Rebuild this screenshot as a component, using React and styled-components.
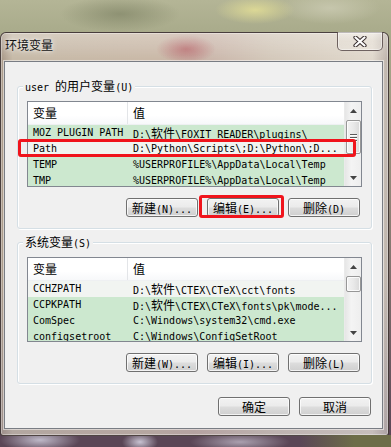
import React from "react";
import styled, { createGlobalStyle } from "styled-components";

const Global = createGlobalStyle`
  html, body { margin:0; padding:0; }
  body { width:391px; height:447px; overflow:hidden; }
  * { box-sizing:border-box; }
`;

const Desktop = styled.div`
  position:relative;
  width:391px;
  height:447px;
  overflow:hidden;
  padding-top:32px;
  font-family:"DejaVu Sans Mono","Noto Sans CJK SC",monospace;
  background:
    radial-gradient(ellipse 40px 14px at 255px 10px, rgba(230,225,150,.8), transparent),
    radial-gradient(ellipse 60px 18px at 120px 14px, rgba(120,125,95,.6), transparent),
    radial-gradient(ellipse 50px 16px at 330px 8px, rgba(200,200,175,.9), transparent),
    radial-gradient(ellipse 40px 12px at 40px 440px, rgba(190,185,200,1), transparent),
    radial-gradient(ellipse 18px 10px at 140px 442px, rgba(200,195,210,1), transparent),
    radial-gradient(ellipse 50px 10px at 240px 442px, rgba(170,160,175,1), transparent),
    linear-gradient(180deg, #b4b596 0px, #a9ab8b 32px, #8f8577 200px, #5a4656 436px),
    #6a5a5a;
  &::after {
    content:"";
    position:absolute; left:300px; right:0; bottom:0; height:12px;
    background:linear-gradient(90deg, rgba(110,110,75,0), #6d6d48 60%);
  }
`;

const Window = styled.div`
  width:389px;
  height:404px;
  display:flex;
  flex-direction:column;
  padding:0 5px 6px 3px;
  border:1px solid rgba(45,35,35,.8);
  border-radius:6px 6px 3px 3px;
  background:
    linear-gradient(180deg, rgba(255,255,255,.28), rgba(255,255,255,0) 26px),
    radial-gradient(ellipse 30px 14px at 185px 16px, rgba(180,95,100,.75), transparent),
    linear-gradient(180deg, rgba(0,0,0,0) 60%, rgba(120,110,140,.25)),
    linear-gradient(90deg, #a89888 0, #c6baa8 3%, #cab9a8 40%, #c9b3a8 50%, #d4c9bb 70%, #e0d8cc 96%, #bdb3ab 100%);
  box-shadow:inset 0 0 0 1px rgba(255,255,255,.35);
`;

const TitleBar = styled.div`
  height:28px;
  display:flex;
  justify-content:space-between;
  align-items:flex-start;
`;

const Title = styled.div`
  margin:5px 0 0 1px;
  font-family:"Noto Sans CJK SC",sans-serif;
  font-size:12px;
  line-height:14px;
  color:#111;
  text-shadow:0 0 6px rgba(255,255,255,.9), 0 0 3px rgba(255,255,255,.7);
`;

const CloseBtn = styled.div`
  margin-top:-1px;
  width:46px;
  height:19px;
  display:flex;
  align-items:center;
  justify-content:center;
  border:1px solid rgba(70,55,55,.75);
  border-top:none;
  border-radius:0 0 5px 5px;
  background:linear-gradient(180deg, rgba(255,255,255,.35), rgba(255,255,255,.1) 50%, rgba(255,255,255,.2));
  box-shadow:inset 0 0 0 1px rgba(255,255,255,.45);
`;

const Client = styled.div`
  flex:1;
  display:flex;
  flex-direction:column;
  padding:0 10px 0 12px;
  background:#f0f0f0;
  border:1px solid rgba(70,75,85,.7);
  box-shadow:0 0 0 1px rgba(255,255,255,.5);
`;

const Group = styled.div`
  margin-top:${p => p.$top}px;
  display:flex;
  flex-direction:column;
  padding:0 9px 11px;
  border:1px solid #d5dfe5;
  border-radius:3px;
  box-shadow:inset 1px 1px 0 #fff, 1px 1px 0 #fff;
`;

const Legend = styled.div`
  align-self:flex-start;
  margin:-8px 0 0 -4px;
  padding:0 2px;
  height:14px;
  line-height:14px;
  font-size:10px;
  color:#000;
  background:#f0f0f0;
  white-space:nowrap;
`;

const Cjk = styled.span`
  font-family:"Noto Sans CJK SC",sans-serif;
  font-size:12px;
`;

const List = styled.div`
  margin-top:8px;
  height:${p => p.$h}px;
  display:flex;
  border:1px solid #828790;
  background:#fff;
  overflow:hidden;
`;

const Table = styled.div`
  flex:1;
  min-width:0;
  display:flex;
  flex-direction:column;
`;

const Header = styled.div`
  flex:none;
  height:23px;
  display:flex;
  background:linear-gradient(180deg, #fff 0%, #fff 60%, #f7f8fa 100%);
  border-bottom:1px solid #eef0f2;
`;

const HeadCell = styled.div`
  ${p => p.$w ? `width:${p.$w}px; border-right:1px solid #e3e5e8;` : "flex:1;"}
  padding-left:5px;
  line-height:22px;
  font-family:"Noto Sans CJK SC",sans-serif;
  font-size:12px;
  color:#000;
`;

const Row = styled.div`
  flex:none;
  height:16px;
  display:flex;
  background:${p => p.$hl ? "#f1f4f1" : "#cce8cf"};
`;

const Cell = styled.div`
  ${p => p.$w ? `width:${p.$w}px;` : "flex:1; min-width:0;"}
  padding-left:5px;
  line-height:16px;
  font-size:10px;
  color:#000;
  white-space:nowrap;
  overflow:hidden;
`;

const Scroll = styled.div`
  width:17px;
  flex:none;
  display:flex;
  flex-direction:column;
  background:linear-gradient(90deg, #e6e6e6, #f4f4f4 40%, #eeeeee);
  border-left:1px solid #eaeaea;
`;

const Arrow = styled.div`
  height:17px;
  flex:none;
  display:flex;
  align-items:center;
  justify-content:center;
`;

const Track = styled.div`
  flex:1;
  display:flex;
  flex-direction:column;
  align-items:center;
`;

const Thumb = styled.div`
  margin-top:${p => p.$top}px;
  width:15px;
  height:${p => p.$h}px;
  display:flex;
  flex-direction:column;
  align-items:center;
  justify-content:center;
  gap:2px;
  border:1px solid #979797;
  border-radius:2px;
  background:linear-gradient(90deg, #f3f3f3, #e9e9e9 50%, #d9d9d9);
  box-shadow:inset 0 0 0 1px rgba(255,255,255,.8);
`;

const Grip = styled.span`
  width:7px;
  height:1px;
  background:#5a5a5a;
  box-shadow:0 1px 0 #fff;
`;

const BtnRow = styled.div`
  margin:${p => p.$mt}px ${p => p.$mr}px 0 0;
  display:flex;
  justify-content:flex-end;
  gap:9px;
`;

const Btn = styled.button`
  width:72px;
  height:19px;
  padding:0;
  border:1px solid #707070;
  border-radius:3px;
  background:linear-gradient(180deg, #f2f2f2 0%, #ebebeb 48%, #dddddd 52%, #cfcfcf 100%);
  box-shadow:inset 0 0 0 1px rgba(255,255,255,.75);
  font-family:"DejaVu Sans Mono","Noto Sans CJK SC",monospace;
  font-size:10px;
  line-height:17px;
  color:#000;
  white-space:nowrap;
`;

const Mark = styled.div`
  position:absolute;
  left:${p => p.$x}px;
  top:${p => p.$y}px;
  width:${p => p.$w}px;
  height:${p => p.$h}px;
  border:3px solid #f0141c;
  border-radius:3px;
  pointer-events:none;
`;

const cjkRe = /([\u2E80-\u9FFF\uFF00-\uFFEF]+)/;
function Txt({ children }) {
  return String(children)
    .split(cjkRe)
    .map((s, i) => (i % 2 ? <Cjk key={i}>{s}</Cjk> : s));
}

function Tri({ down }) {
  return (
    <svg width="7" height="4" viewBox="0 0 7 4">
      <path d={down ? "M0 0h7L3.5 4z" : "M0 4h7L3.5 0z"} fill="#444" />
    </svg>
  );
}

function VarList({ h, rows, thumbTop, thumbH, grip }) {
  return (
    <List $h={h}>
      <Table>
        <Header>
          <HeadCell $w={100}>变量</HeadCell>
          <HeadCell>值</HeadCell>
        </Header>
        {rows.map(([k, v, hl]) => (
          <Row key={k} $hl={hl}>
            <Cell $w={100}>{k}</Cell>
            <Cell><Txt>{v}</Txt></Cell>
          </Row>
        ))}
      </Table>
      <Scroll>
        <Arrow><Tri /></Arrow>
        <Track>
          <Thumb $top={thumbTop} $h={thumbH}>
            {grip && <><Grip /><Grip /><Grip /></>}
          </Thumb>
        </Track>
        <Arrow><Tri down /></Arrow>
      </Scroll>
    </List>
  );
}

const userRows = [
  ["MOZ PLUGIN PATH", "D:\\软件\\FOXIT READER\\plugins\\"],
  ["Path", "D:\\Python\\Scripts\\;D:\\Python\\;D...", true],
  ["TEMP", "%USERPROFILE%\\AppData\\Local\\Temp"],
  ["TMP", "%USERPROFILE%\\AppData\\Local\\Temp"],
];

const sysRows = [
  ["CCHZPATH", "D:\\软件\\CTEX\\CTeX\\cct\\fonts", true],
  ["CCPKPATH", "D:\\软件\\CTEX\\CTeX\\fonts\\pk\\mode..."],
  ["ComSpec", "C:\\Windows\\system32\\cmd.exe"],
  ["configsetroot", "C:\\Windows\\ConfigSetRoot"],
];

export default function App() {
  return (
    <Desktop>
      <Global />
      <Window>
        <TitleBar>
          <Title>环境变量</Title>
          <CloseBtn>
            <svg width="14" height="11" viewBox="0 0 14 11">
              <path d="M2.5 1.5l9 8M11.5 1.5l-9 8" stroke="#3a3030" strokeWidth="4.2" strokeLinecap="round" />
              <path d="M2.5 1.5l9 8M11.5 1.5l-9 8" stroke="#fff" strokeWidth="2.2" strokeLinecap="round" />
            </svg>
          </CloseBtn>
        </TitleBar>
        <Client>
          <Group $top={24}>
            <Legend><Txt>user 的用户变量(U)</Txt></Legend>
            <VarList h={86} rows={userRows} thumbTop={1} thumbH={34} grip />
            <BtnRow $mt={11} $mr={2}>
              <Btn><Txt>新建(N)...</Txt></Btn>
              <Btn><Txt>编辑(E)...</Txt></Btn>
              <Btn><Txt>删除(D)</Txt></Btn>
            </BtnRow>
          </Group>
          <Group $top={13}>
            <Legend><Txt>系统变量(S)</Txt></Legend>
            <VarList h={85} rows={sysRows} thumbTop={1} thumbH={16} />
            <BtnRow $mt={11} $mr={2}>
              <Btn><Txt>新建(W)...</Txt></Btn>
              <Btn><Txt>编辑(I)...</Txt></Btn>
              <Btn><Txt>删除(L)</Txt></Btn>
            </BtnRow>
          </Group>
          <BtnRow $mt={13} $mr={1}>
            <Btn><Txt>确定</Txt></Btn>
            <Btn><Txt>取消</Txt></Btn>
          </BtnRow>
        </Client>
      </Window>
      <Mark $x={18} $y={139} $w={338} $h={18} />
      <Mark $x={199} $y={195} $w={85} $h={23} />
    </Desktop>
  );
}
